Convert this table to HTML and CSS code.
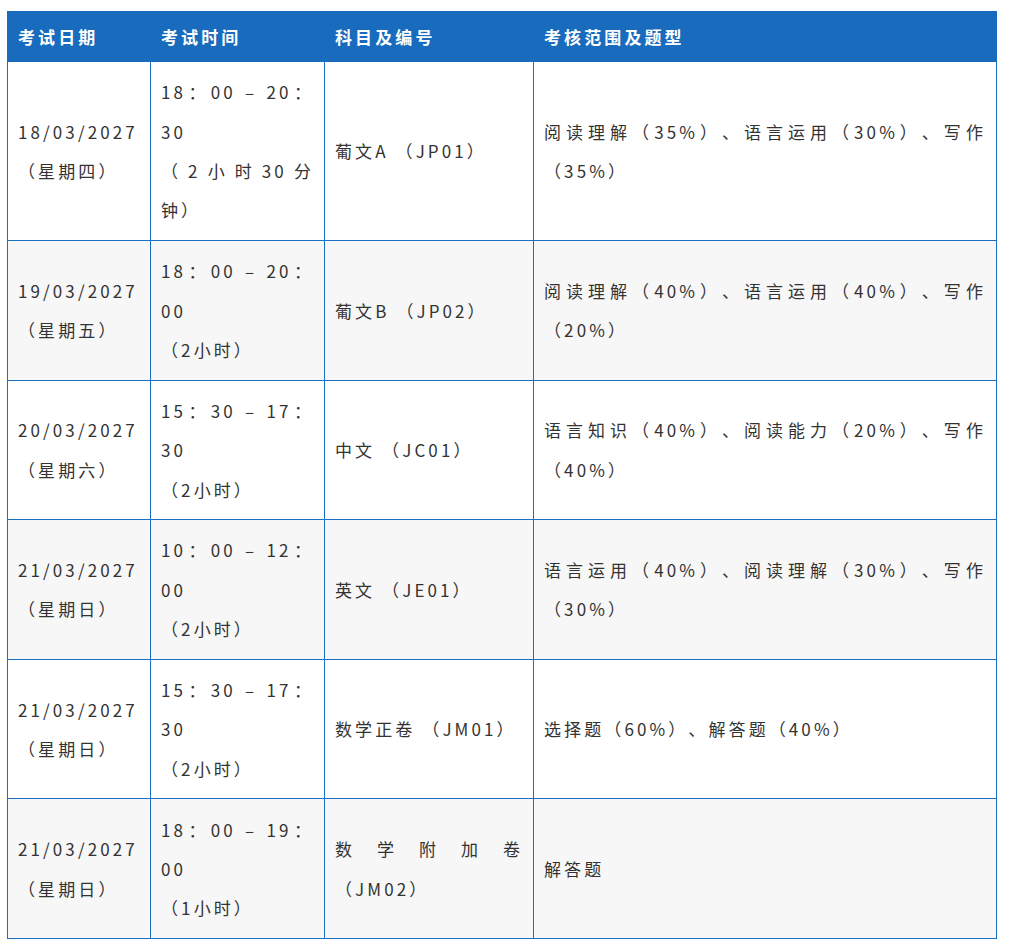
FILE: index.html
```html
<!DOCTYPE html>
<html lang="zh-CN">
<head>
<meta charset="utf-8">
<title>考试时间表</title>
<link rel="stylesheet" href="styles.css">
</head>
<body>
<table class="exam-table">
  <colgroup>
    <col class="c-date">
    <col class="c-time">
    <col class="c-subject">
    <col class="c-scope">
  </colgroup>
  <thead>
    <tr>
      <th>考试日期</th>
      <th>考试时间</th>
      <th>科目及编号</th>
      <th>考核范围及题型</th>
    </tr>
  </thead>
  <tbody>
    <tr>
      <td>18/03/2027<br>（星期四）</td>
      <td>18：00 – 20：30<br>（2小时30分钟）</td>
      <td>葡文A （JP01）</td>
      <td>阅读理解（35%）、语言运用（30%）、写作（35%）</td>
    </tr>
    <tr class="alt">
      <td>19/03/2027<br>（星期五）</td>
      <td>18：00 – 20：00<br>（2小时）</td>
      <td>葡文B （JP02）</td>
      <td>阅读理解（40%）、语言运用（40%）、写作（20%）</td>
    </tr>
    <tr>
      <td>20/03/2027<br>（星期六）</td>
      <td>15：30 – 17：30<br>（2小时）</td>
      <td>中文 （JC01）</td>
      <td>语言知识（40%）、阅读能力（20%）、写作（40%）</td>
    </tr>
    <tr class="alt">
      <td>21/03/2027<br>（星期日）</td>
      <td>10：00 – 12：00<br>（2小时）</td>
      <td>英文 （JE01）</td>
      <td>语言运用（40%）、阅读理解（30%）、写作（30%）</td>
    </tr>
    <tr>
      <td>21/03/2027<br>（星期日）</td>
      <td>15：30 – 17：30<br>（2小时）</td>
      <td>数学正卷 （JM01）</td>
      <td>选择题（60%）、解答题（40%）</td>
    </tr>
    <tr class="alt">
      <td>21/03/2027<br>（星期日）</td>
      <td>18：00 – 19：00<br>（1小时）</td>
      <td>数学附加卷 （JM02）</td>
      <td>解答题</td>
    </tr>
  </tbody>
</table>
</body>
</html>
```

FILE: styles.css
```css
html, body {
  margin: 0;
  padding: 0;
  background: #ffffff;
}

body {
  padding: 11px 13px 0 7px;
  font-family: "Noto Sans CJK SC", "Noto Sans", sans-serif;
  font-size: 17px;
  letter-spacing: 3.1px;
  color: #333333;
  text-spacing-trim: space-all;
}

.exam-table {
  width: 989px;
  border-collapse: collapse;
  table-layout: fixed;
}

.c-date { width: 143px; }
.c-time { width: 174px; }
.c-subject { width: 209px; }
.c-scope { width: 463px; }

.exam-table th {
  background: #186bbd;
  color: #ffffff;
  font-weight: 700;
  text-align: left;
  line-height: 29px;
  padding: 10px 10px;
  border: 1px solid #186bbd;
}

.exam-table td {
  border: 1px solid #1a6fc0;
  padding: 10.2px 10px;
  line-height: 39.4px;
  vertical-align: middle;
  text-align: justify;
  background: #ffffff;
}

.exam-table tr.alt td {
  background: #f7f7f7;
}
```
